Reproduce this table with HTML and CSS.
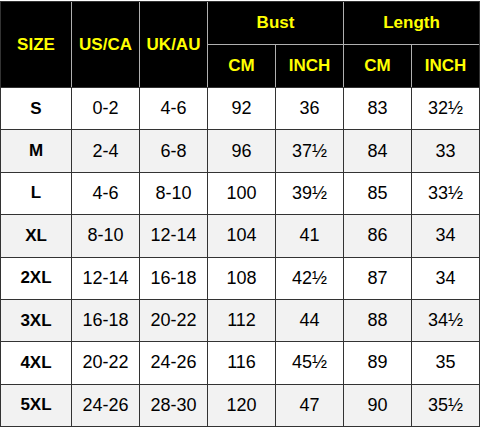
FILE: index.html
```html
<!DOCTYPE html>
<html>
<head>
<meta charset="utf-8">
<link rel="stylesheet" href="styles.css">
</head>
<body>
<div class="chart">
  <div class="head">
    <div class="hc span-rows">SIZE</div>
    <div class="hc span-rows">US/CA</div>
    <div class="hc span-rows">UK/AU</div>
    <div class="hc span-cols">Bust</div>
    <div class="hc span-cols">Length</div>
    <div class="hc">CM</div>
    <div class="hc">INCH</div>
    <div class="hc">CM</div>
    <div class="hc">INCH</div>
  </div>
  <div class="body">
    <div class="row"><div class="c size">S</div><div class="c">0-2</div><div class="c">4-6</div><div class="c">92</div><div class="c">36</div><div class="c">83</div><div class="c">32½</div></div>
    <div class="row alt"><div class="c size">M</div><div class="c">2-4</div><div class="c">6-8</div><div class="c">96</div><div class="c">37½</div><div class="c">84</div><div class="c">33</div></div>
    <div class="row"><div class="c size">L</div><div class="c">4-6</div><div class="c">8-10</div><div class="c">100</div><div class="c">39½</div><div class="c">85</div><div class="c">33½</div></div>
    <div class="row alt"><div class="c size">XL</div><div class="c">8-10</div><div class="c">12-14</div><div class="c">104</div><div class="c">41</div><div class="c">86</div><div class="c">34</div></div>
    <div class="row"><div class="c size">2XL</div><div class="c">12-14</div><div class="c">16-18</div><div class="c">108</div><div class="c">42½</div><div class="c">87</div><div class="c">34</div></div>
    <div class="row alt"><div class="c size">3XL</div><div class="c">16-18</div><div class="c">20-22</div><div class="c">112</div><div class="c">44</div><div class="c">88</div><div class="c">34½</div></div>
    <div class="row"><div class="c size">4XL</div><div class="c">20-22</div><div class="c">24-26</div><div class="c">116</div><div class="c">45½</div><div class="c">89</div><div class="c">35</div></div>
    <div class="row alt"><div class="c size">5XL</div><div class="c">24-26</div><div class="c">28-30</div><div class="c">120</div><div class="c">47</div><div class="c">90</div><div class="c">35½</div></div>
  </div>
</div>
</body>
</html>
```
FILE: styles.css
```css
html, body {
  margin: 0;
  padding: 0;
  background: #fff;
}
body {
  padding-top: 1px;
  font-family: "Liberation Sans", Arial, sans-serif;
}
.chart {
  width: 478px;
  border: 1px solid #333;
  background: #333;
}
.head {
  display: grid;
  grid-template-columns: 70px repeat(6, 67px);
  grid-template-rows: 42px 42px;
  gap: 1px;
  background: #b0b0b0;
}
.hc {
  background: #000;
  color: #ffff00;
  font-weight: bold;
  font-size: 17px;
  display: flex;
  align-items: center;
  justify-content: center;
}
.span-rows { grid-row: span 2; }
.span-cols { grid-column: span 2; }
.body {
  margin-top: 1px;
  height: 338px;
  display: grid;
  grid-template-rows: repeat(8, 1fr);
  gap: 1px;
  background: #333;
}
.row {
  display: grid;
  grid-template-columns: 70px repeat(6, 67px);
  gap: 1px;
}
.c {
  background: #fff;
  color: #000;
  font-size: 18px;
  display: flex;
  align-items: center;
  justify-content: center;
}
.row.alt .c {
  background: #f2f2f2;
}
.size {
  font-weight: bold;
  font-size: 17px;
}
```
